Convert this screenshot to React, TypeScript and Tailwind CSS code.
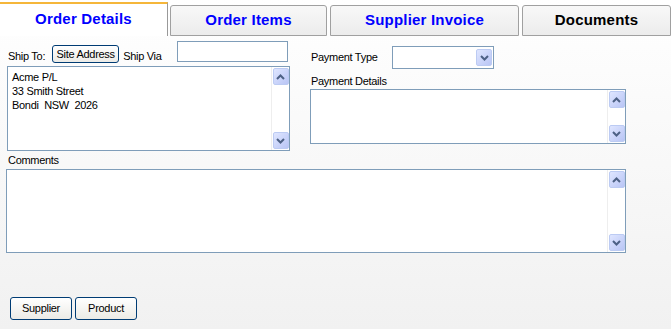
import React from 'react';

const Chevron = ({ up = false }: { up?: boolean }) => (
  <svg width="9" height="6" viewBox="0 0 9 6" className="block">
    <polyline
      points={up ? '1,5 4.5,1.5 8,5' : '1,1 4.5,4.5 8,1'}
      fill="none"
      stroke="#4d6185"
      strokeWidth="2"
    />
  </svg>
);

const ArrowButton = ({ up = false }: { up?: boolean }) => (
  <div className="w-[16px] h-[17px] rounded-[2px] border border-[#bccbf3] bg-gradient-to-br from-[#dfe6ff] to-[#b9c5f5] flex items-center justify-center">
    <Chevron up={up} />
  </div>
);

const TextBox = ({ className, children }: { className: string; children?: React.ReactNode }) => (
  <div className={`flex bg-white border border-[#7f9db9] ${className}`}>
    <div className="flex-1 px-[4px] pt-[3px] leading-[14px]">{children}</div>
    <div className="w-[18px] border-l border-[#eeeeee] flex flex-col justify-between items-center py-[1px]">
      <ArrowButton up />
      <ArrowButton />
    </div>
  </div>
);

const XpButton = ({ label, className }: { label: string; className: string }) => (
  <button className={`border border-[#003c74] rounded-[3px] bg-gradient-to-b from-white to-[#ecebe6] text-black leading-none ${className}`}>
    {label}
  </button>
);

const tabs = [
  { label: 'Order Items', w: 'w-[157px] ml-[2px]', color: 'text-[#0000ff]' },
  { label: 'Supplier Invoice', w: 'w-[189px] ml-[3px]', color: 'text-[#0000ff]' },
  { label: 'Documents', w: 'flex-1 ml-[3px]', color: 'text-black' },
];

export default function App() {
  return (
    <div
      className="w-[671px] h-[329px] overflow-hidden bg-gradient-to-b from-white via-[#f8f8f8] to-[#f1f1f1] text-[11px] tracking-[-0.3px] text-black"
      style={{ fontFamily: '"Liberation Sans", Arial, sans-serif' }}
    >
      {/* Tabs */}
      <div className="flex items-end h-[36px]">
        <div className="w-[168px] h-[34px] border-t-2 border-[#f5b63a] border-r border-r-[#999999] bg-white flex items-center justify-center">
          <span className="text-[15px] font-bold text-[#0000ff] tracking-[0.2px] -mt-[2px]">Order Details</span>
        </div>
        {tabs.map((t, i) => (
          <div
            key={i}
            className={`${t.w} h-[31px] rounded-t-[3px] border border-[#a0a0a0] bg-gradient-to-b from-[#f8f8f8] to-[#ececec] flex items-center justify-center`}
          >
            <span className={`text-[15px] font-bold ${t.color} tracking-[0.2px]`}>{t.label}</span>
          </div>
        ))}
      </div>

      {/* Form */}
      <div className="flex">
        <div className="w-[290px] pl-[7px]">
          <div className="flex items-start mt-[5px] h-[22px]">
            <span className="ml-[1px] mt-[7px]">Ship To:</span>
            <XpButton label="Site Address" className="ml-[7px] mt-[4px] w-[67px] h-[18px] text-[11px]" />
            <span className="ml-[4px] mt-[7px]">Ship Via</span>
            <div className="ml-[15px] w-[111px] h-[21px] bg-white border border-[#7f9db9]" />
          </div>
          <TextBox className="mt-[3px] w-[283px] h-[85px]">
            <div>Acme P/L</div>
            <div>33 Smith Street</div>
            <div className="whitespace-pre">Bondi  NSW  2026</div>
          </TextBox>
        </div>
        <div className="pl-[20px]">
          <div className="flex items-center mt-[10px]">
            <span className="ml-[1px] w-[81px]">Payment Type</span>
            <div className="w-[102px] h-[23px] bg-white border border-[#7f9db9] flex justify-end items-center pr-[1px]">
              <ArrowButton />
            </div>
          </div>
          <div className="ml-[1px] mt-[6px] leading-[13px]">Payment Details</div>
          <TextBox className="mt-[1px] w-[316px] h-[55px]" />
        </div>
      </div>

      <div className="pl-[8px] mt-[3px] leading-[13px]">Comments</div>
      <TextBox className="ml-[6px] mt-[2px] w-[620px] h-[84px]" />

      <div className="flex gap-[3px] pl-[10px] mt-[44px]">
        <XpButton label="Supplier" className="w-[62px] h-[23px] text-[11px]" />
        <XpButton label="Product" className="w-[62px] h-[23px] text-[11px]" />
      </div>
    </div>
  );
}
